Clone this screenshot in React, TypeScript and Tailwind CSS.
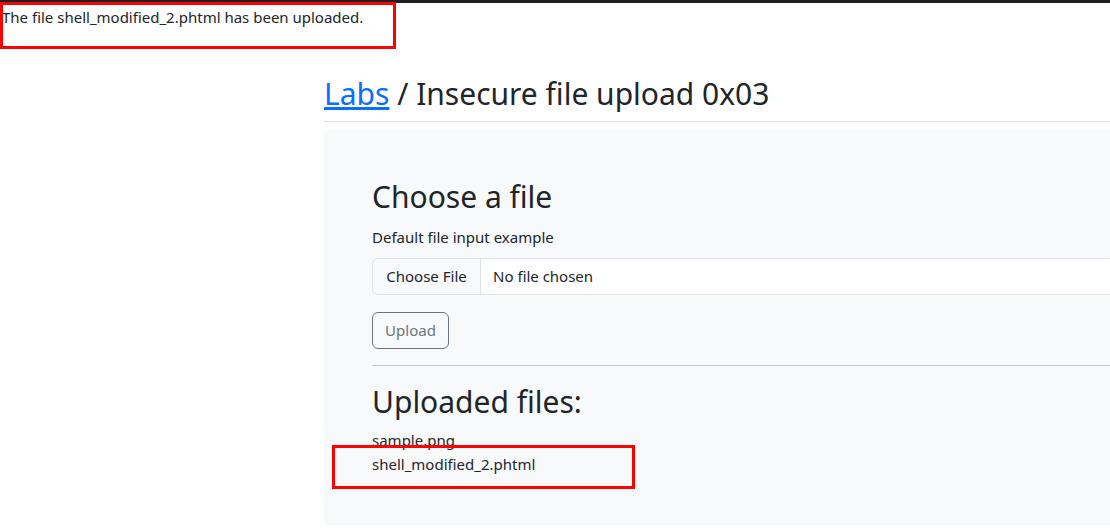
import React from "react";

export default function App() {
  const font = { fontFamily: '"Noto Sans", "Open Sans", sans-serif' };
  return (
    <div className="relative w-[1110px] h-[529px] overflow-hidden bg-white text-[#212529]" style={font}>
      <div className="h-[3px] bg-[#1f1f23]" />
      <div className="pl-[2px] pt-[4px] text-[15px] leading-[20px]">The file shell_modified_2.phtml has been uploaded.</div>

      <div className="ml-[324px] w-[1000px] mt-[49px]">
        <h1 className="text-[30px] leading-[36px] pb-[9px] border-b border-[#dee2e6]">
          <a className="text-[#0d6efd] underline">Labs</a> / Insecure file upload 0x03
        </h1>
        <div className="mt-[8px] bg-[#f8f9fa] rounded-[6px] pl-[48px] pt-[49px] pb-[49px]">
          <h2 className="text-[30px] leading-[36px]">Choose a file</h2>
          <div className="mt-[11px] text-[15px] leading-[22px]">Default file input example</div>
          <div className="mt-[10px] flex h-[37px] border border-[#dee2e6] rounded-l-[6px] bg-white text-[15px]">
            <div className="w-[108px] flex items-center justify-center bg-[#f8f9fa] border-r border-[#dee2e6] rounded-l-[6px]">Choose File</div>
            <div className="flex items-center pl-[12px]">No file chosen</div>
          </div>
          <div className="mt-[17px] w-[77px] h-[37px] flex items-center justify-center border border-[#6c757d] rounded-[6px] text-[#6c757d] text-[15px]">Upload</div>
          <div className="mt-[16px] h-px bg-[#c4c6c9]" />
          <h2 className="mt-[18px] text-[30px] leading-[36px]">Uploaded files:</h2>
          <div className="mt-[8px] text-[15px] leading-[24px]">
            <div>sample.png</div>
            <div>shell_modified_2.phtml</div>
          </div>
        </div>
      </div>

      <div className="absolute left-0 top-[2px] w-[396px] h-[47px] border-[3px] border-[#ff0000]" />
      <div className="absolute left-[332px] top-[445px] w-[303px] h-[44px] border-[3px] border-[#ff0000]" />
    </div>
  );
}
